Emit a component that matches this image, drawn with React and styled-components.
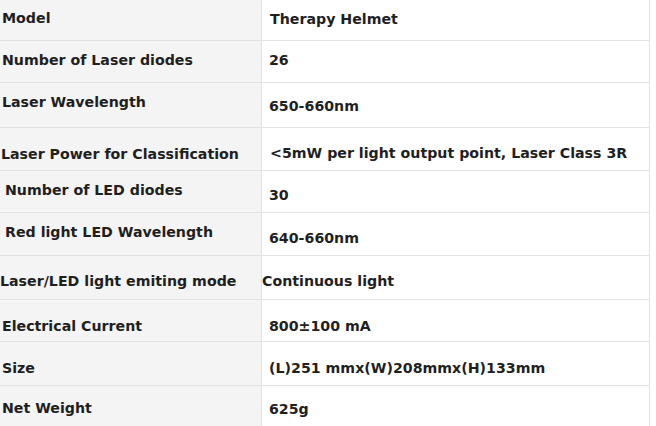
import React from "react";
import styled, { createGlobalStyle } from "styled-components";

const GlobalStyle = createGlobalStyle`
  html, body {
    margin: 0;
    padding: 0;
    background: #ffffff;
  }
  body {
    font-family: "DejaVu Sans", "Liberation Sans", sans-serif;
    color: #1f1f1f;
  }
`;

const Table = styled.div`
  width: 650px;
  border-right: 1px solid #e3e3e3;
  box-sizing: border-box;
  display: flex;
  flex-direction: column;
`;

const Row = styled.div`
  display: grid;
  grid-template-columns: 262px 1fr;
  height: ${(p) => p.$h}px;
  box-sizing: border-box;
  border-bottom: ${(p) => (p.$last ? "none" : "1px solid #e2e2e2")};
`;

const Cell = styled.div`
  display: flex;
  align-items: center;
  box-sizing: border-box;
  font-size: 14.2px;
  font-weight: 700;
  white-space: nowrap;
  padding-left: ${(p) => p.$x}px;
  padding-top: ${(p) => Math.max(0, p.$dy * 2)}px;
  padding-bottom: ${(p) => Math.max(0, -p.$dy * 2)}px;
`;

const LabelCell = styled(Cell)`
  background: #f4f4f4;
  border-right: 1px solid #e0e0e0;
`;

const ValueCell = styled(Cell)`
  background: #ffffff;
`;

const rows = [
  { label: "Model", value: "Therapy Helmet", h: 41, lx: 2, ly: -2, vx: 8, vy: -1 },
  { label: "Number of Laser diodes", value: "26", h: 42, lx: 2, ly: -2, vx: 7, vy: -2 },
  { label: "Laser Wavelength", value: "650-660nm", h: 45, lx: 2, ly: -3, vx: 7, vy: 1 },
  { label: "Laser Power for Classification", value: "<5mW per light output point, Laser Class 3R", h: 43, lx: 1, ly: 5, vx: 8, vy: 4 },
  { label: "Number of LED diodes", value: "30", h: 42, lx: 5, ly: -2, vx: 7, vy: 3 },
  { label: "Red light LED Wavelength", value: "640-660nm", h: 43, lx: 5, ly: -2, vx: 7, vy: 4 },
  { label: "Laser/LED light emiting mode", value: "Continuous light", h: 44, lx: 0, ly: 3, vx: 0, vy: 3 },
  { label: "Electrical Current", value: "800±100 mA", h: 42, lx: 2, ly: 5, vx: 7, vy: 5 },
  { label: "Size", value: "(L)251 mmx(W)208mmx(H)133mm", h: 44, lx: 2, ly: 4, vx: 7, vy: 4 },
  { label: "Net Weight", value: "625g", h: 40, lx: 2, ly: 2, vx: 7, vy: 3, last: true },
];

export default function App() {
  return (
    <>
      <GlobalStyle />
      <Table>
        {rows.map((r) => (
          <Row key={r.label} $h={r.h} $last={r.last}>
            <LabelCell $x={r.lx} $dy={r.ly}>{r.label}</LabelCell>
            <ValueCell $x={r.vx} $dy={r.vy}>{r.value}</ValueCell>
          </Row>
        ))}
      </Table>
    </>
  );
}
